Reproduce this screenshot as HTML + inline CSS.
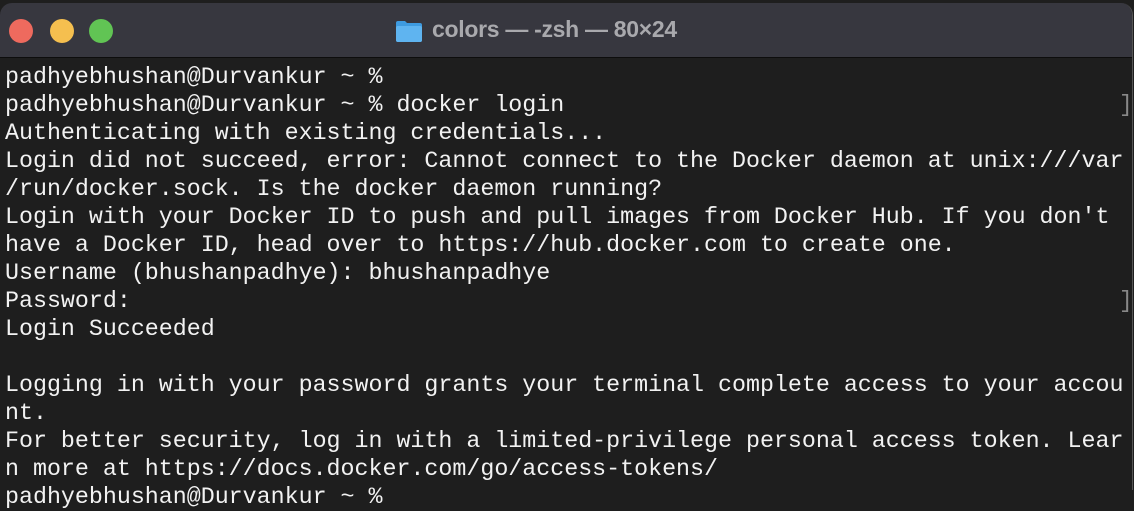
<!DOCTYPE html>
<html><head><meta charset="utf-8"><style>
html,body{margin:0;padding:0;width:1134px;height:490px;overflow:hidden;background:#1e1e1e;}
.win{position:absolute;left:0;top:3px;width:1132px;height:487px;background:#1e1e1e;border-radius:12px 12px 0 0;overflow:hidden;border-right:1px solid #555;}
.tb{height:54px;background:#37373f;border-bottom:1px solid #0d0d0d;position:relative;}
.dot{position:absolute;top:16px;width:24px;height:24px;border-radius:50%;}
.title{position:absolute;left:432px;top:13px;font:bold 23px "Liberation Sans",sans-serif;color:#a9a9ad;letter-spacing:-0.3px;}
.folder{position:absolute;left:395px;top:16px;width:28px;height:24px;}
pre{margin:0;position:absolute;left:5px;top:63px;font:23.3px/28px "Liberation Mono",monospace;color:#f2f2f2;}
.br{position:absolute;color:#888;font:23px/28px "Liberation Mono",monospace;}
</style></head><body>
<div class="win">
<div class="tb">
<div class="dot" style="left:9px;background:#ee6a5e"></div>
<div class="dot" style="left:50px;background:#f5bf4f"></div>
<div class="dot" style="left:89px;background:#61c454"></div>
<svg class="folder" viewBox="0 0 28 24"><path d="M1 4 Q1 2 3 2 H10 L12 4 H25 Q27 4 27 6 V21 Q27 23 25 23 H3 Q1 23 1 21Z" fill="#3e9be0"/><rect x="1" y="7" width="26" height="16" rx="2" fill="#5fb4f0"/></svg>
<div class="title">colors — -zsh — 80×24</div>
</div>
</div>
<pre>padhyebhushan@Durvankur ~ %
padhyebhushan@Durvankur ~ % docker login
Authenticating with existing credentials...
Login did not succeed, error: Cannot connect to the Docker daemon at unix:///var
/run/docker.sock. Is the docker daemon running?
Login with your Docker ID to push and pull images from Docker Hub. If you don't
have a Docker ID, head over to https://hub.docker.com to create one.
Username (bhushanpadhye): bhushanpadhye
Password:
Login Succeeded

Logging in with your password grants your terminal complete access to your accou
nt.
For better security, log in with a limited-privilege personal access token. Lear
n more at https://docs.docker.com/go/access-tokens/
padhyebhushan@Durvankur ~ %</pre>
<div class="br" style="left:1119px;top:91px">]</div>
<div class="br" style="left:1119px;top:287px">]</div>
</body></html>
